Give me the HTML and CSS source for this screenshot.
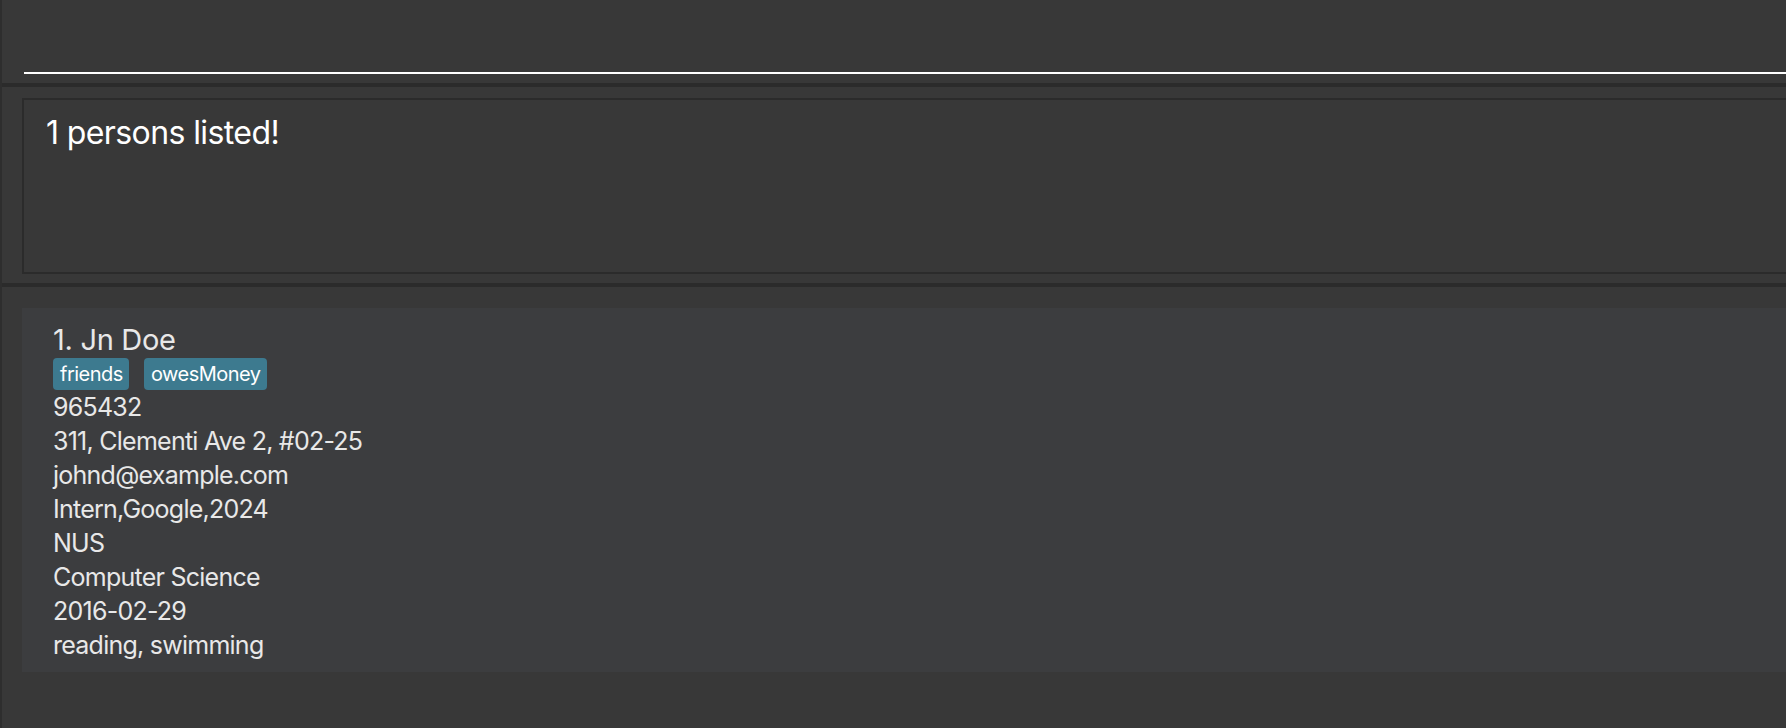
FILE: index.html
```html
<!DOCTYPE html>
<html lang="en">
<head>
    <meta charset="UTF-8">
    <meta name="viewport" content="width=device-width, initial-scale=1.0">
    <title>Address App</title>
    <link rel="stylesheet" href="styles.css">
</head>
<body>
    <div class="window">
        <div class="command-pane">
            <div class="command-field"></div>
        </div>
        <div class="splitter"></div>

        <div class="result-pane">
            <div class="result-box">1 persons listed!</div>
        </div>
        <div class="splitter"></div>

        <div class="list-pane">
            <div class="person-card">
                <div class="name">1. Jn Doe</div>
                <div class="tags">
                    <span class="tag">friends</span>
                    <span class="tag">owesMoney</span>
                </div>
                <div class="detail">965432</div>
                <div class="detail">311, Clementi Ave 2, #02-25</div>
                <div class="detail">johnd@example.com</div>
                <div class="detail">Intern,Google,2024</div>
                <div class="detail">NUS</div>
                <div class="detail">Computer Science</div>
                <div class="detail">2016-02-29</div>
                <div class="detail">reading, swimming</div>
            </div>
        </div>
    </div>
</body>
</html>
```

FILE: styles.css
```css
* {
    margin: 0;
    padding: 0;
    box-sizing: border-box;
    font-family: 'Inter', 'Noto Sans', sans-serif;
}

body {
    background: #383838;
    overflow: hidden;
}

.window {
    height: 728px;
    border-left: 2px solid #2e2e2e;
    display: flex;
    flex-direction: column;
}

.command-pane {
    height: 83px;
    padding-left: 22px;
}

.command-field {
    height: 74px;
    margin-right: -10px;
    border-bottom: 2px solid #ffffff;
}

.splitter {
    height: 4px;
    background: #2b2b2b;
    flex-shrink: 0;
}

.result-pane {
    padding: 11px 0 9px 20px;
}

.result-box {
    height: 176px;
    margin-right: -10px;
    border: 2px solid #2b2b2b;
    padding: 13px 22px;
    color: #ffffff;
    font-size: 32px;
    line-height: 40px;
    letter-spacing: -0.6px;
}

.list-pane {
    flex: 1;
    padding: 21px 0 0 20px;
}

.person-card {
    background: #3c3d3f;
    margin-right: -10px;
    padding: 15px 31px 10px;
    color: #e8e8e8;
}

.name {
    font-size: 29px;
    line-height: 34px;
    letter-spacing: -0.3px;
}

.tags {
    display: flex;
    gap: 15px;
    margin-top: 1px;
}

.tag {
    background: #3d7a8f;
    color: #ffffff;
    font-size: 20px;
    line-height: 32px;
    letter-spacing: -0.5px;
    padding: 0 6px 0 7px;
    border-radius: 4px;
}

.detail {
    font-size: 25px;
    line-height: 34px;
    letter-spacing: -0.75px;
}
```
